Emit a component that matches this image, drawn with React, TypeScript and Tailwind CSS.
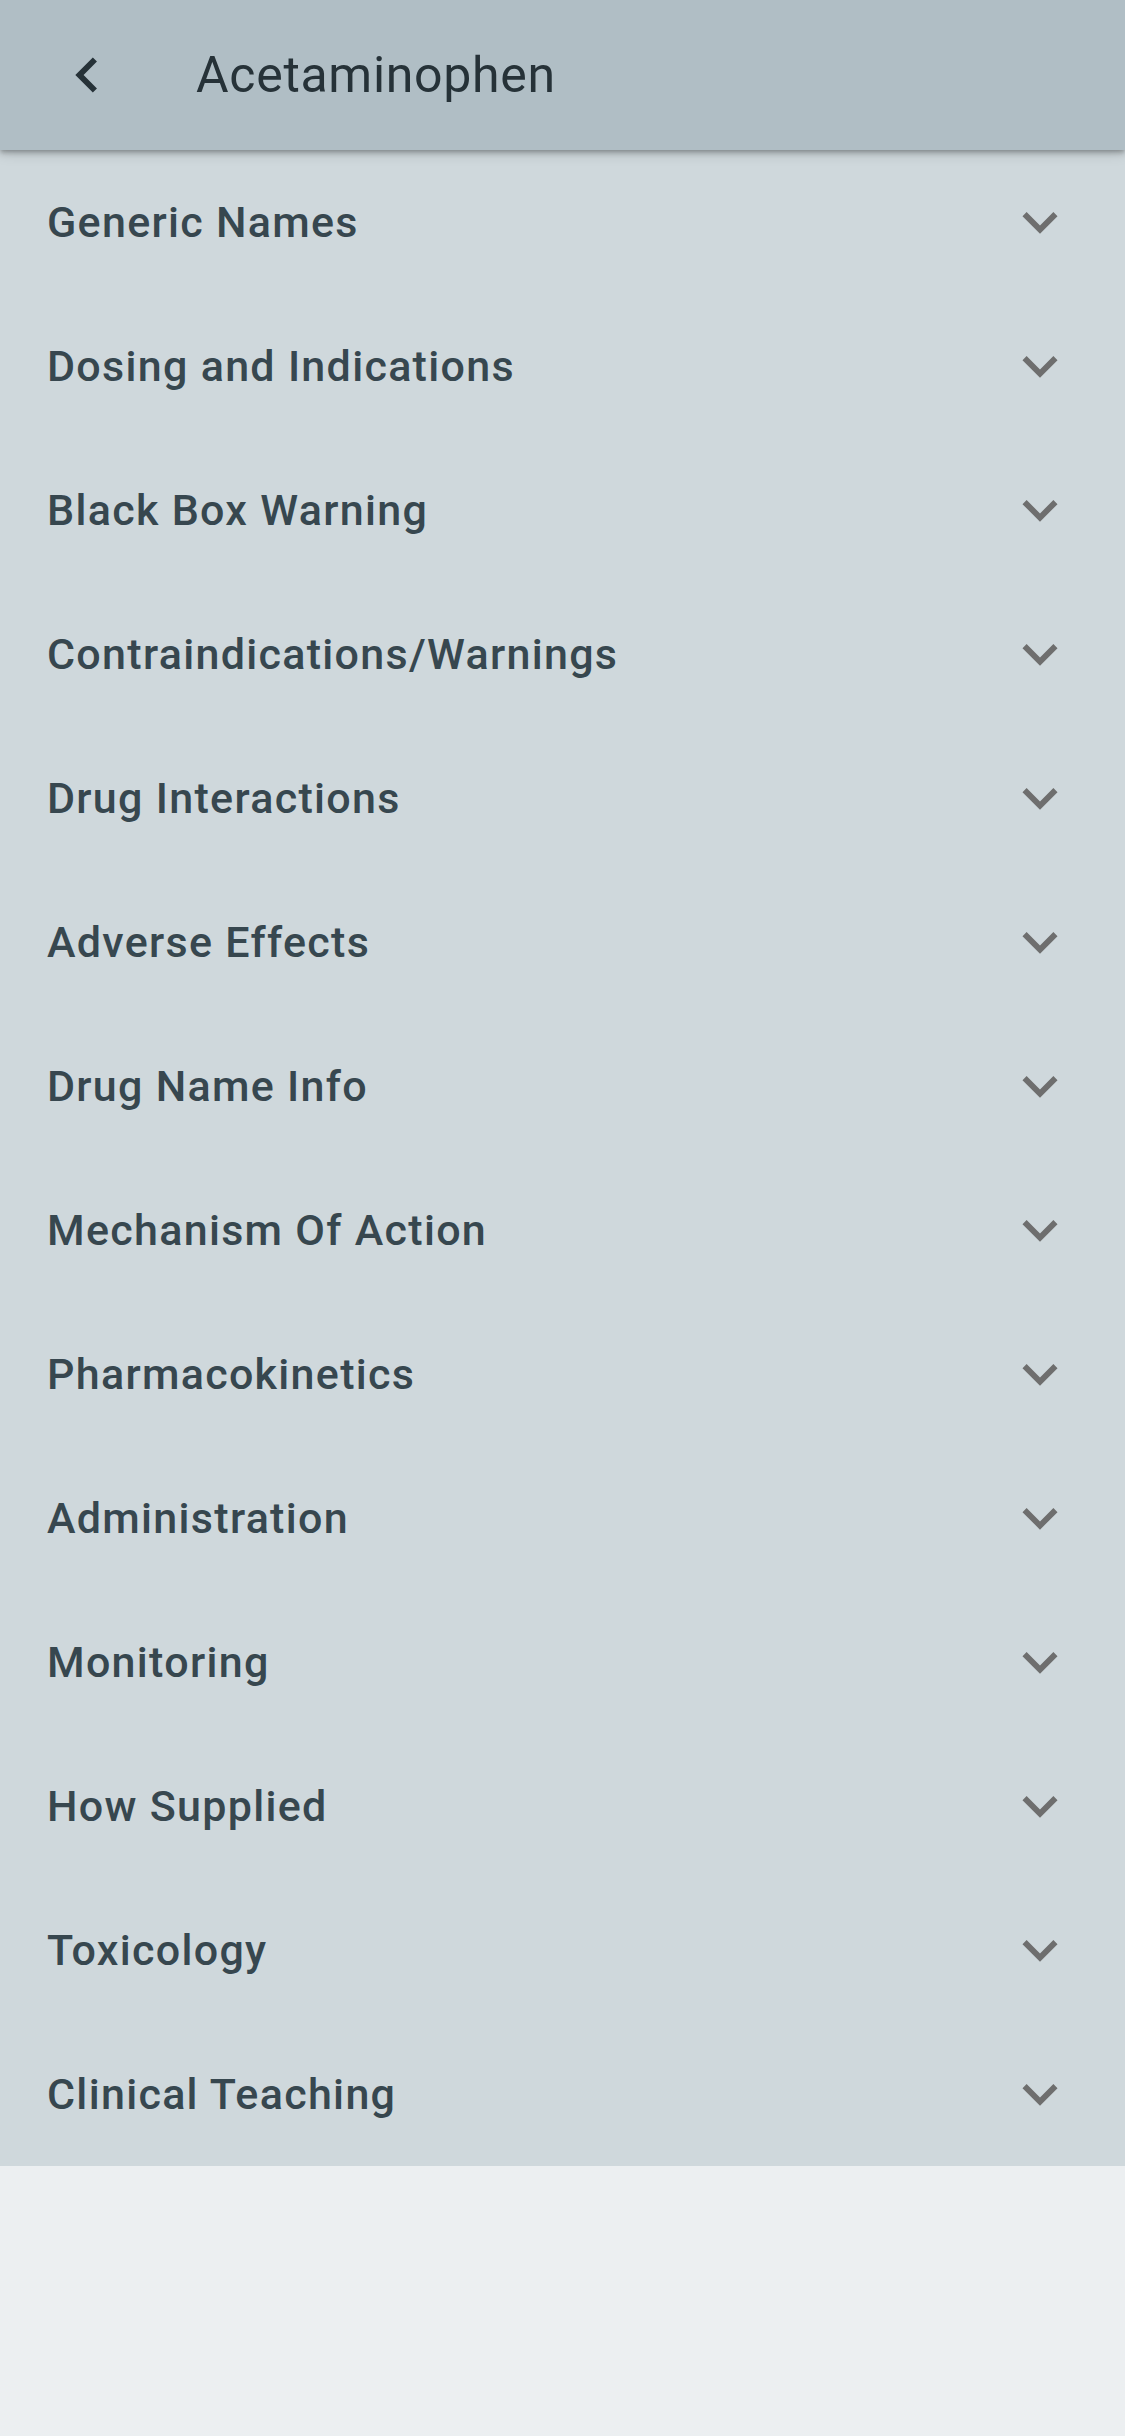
import React from "react";

const sections = [
  "Generic Names",
  "Dosing and Indications",
  "Black Box Warning",
  "Contraindications/Warnings",
  "Drug Interactions",
  "Adverse Effects",
  "Drug Name Info",
  "Mechanism Of Action",
  "Pharmacokinetics",
  "Administration",
  "Monitoring",
  "How Supplied",
  "Toxicology",
  "Clinical Teaching",
];

const ExpandMore = () => (
  <svg viewBox="0 0 24 24" className="w-[70px] h-[70px] fill-[#6e6e6e]">
    <path d="M16.59 8.59L12 13.17 7.41 8.59 6 10l6 6 6-6z" />
  </svg>
);

const ChevronLeft = () => (
  <svg viewBox="0 0 24 24" className="w-[70px] h-[70px] fill-[#263238]">
    <path d="M15.41 7.41L14 6l-6 6 6 6 1.41-1.41L10.83 12z" />
  </svg>
);

export default function App() {
  return (
    <div className="min-h-screen bg-[#eceff1] font-['Roboto',sans-serif]">
      <header className="relative z-10 h-[150px] bg-[#b0bec5] flex items-center shadow-[0_2px_4px_-1px_rgba(0,0,0,0.2),0_4px_5px_0_rgba(0,0,0,0.14),0_2px_14px_0_rgba(0,0,0,0.16)]">
        <div className="w-[196px] pl-[52px] flex items-center">
          <ChevronLeft />
        </div>
        <h1 className="text-[50px] text-[#263238] font-normal tracking-[0.7px]">Acetaminophen</h1>
      </header>
      <div className="bg-[#cfd8dc]">
        {sections.map((s) => (
          <div key={s} className="h-[144px] flex items-center justify-between pl-[47px] pr-[50px]">
            <span className="text-[43px] font-medium text-[#37474f] tracking-[1.3px]">{s}</span>
            <ExpandMore />
          </div>
        ))}
      </div>
    </div>
  );
}
